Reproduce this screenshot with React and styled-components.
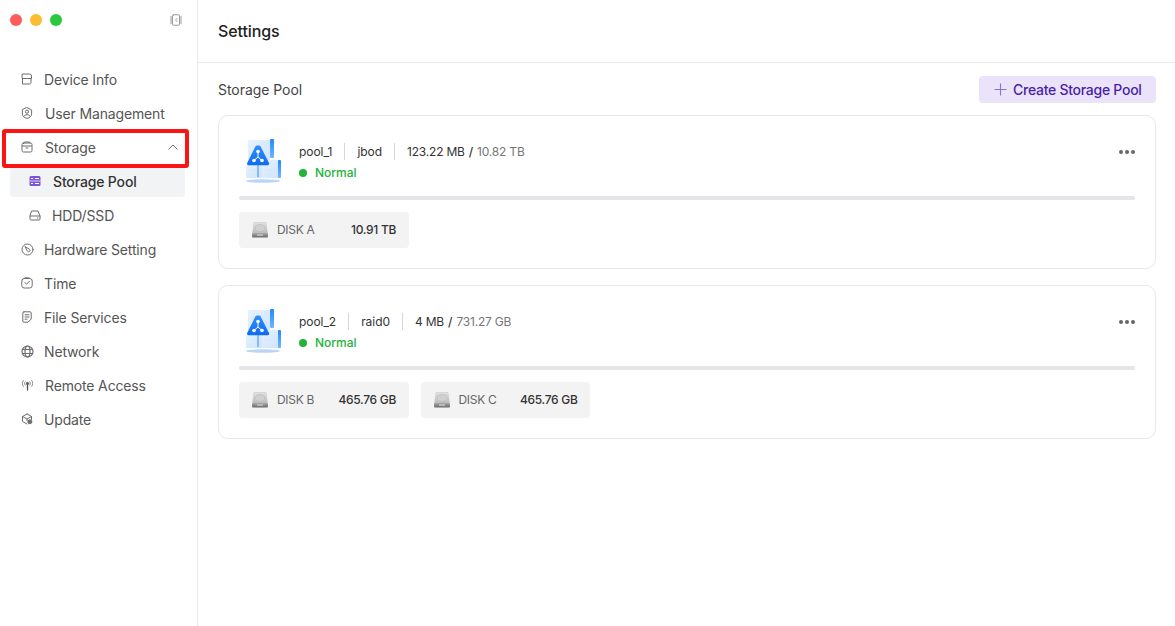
import React from "react";
import styled, { createGlobalStyle } from "styled-components";

const GlobalStyle = createGlobalStyle`
  html, body, #root {
    margin: 0;
    height: 100%;
  }
  body {
    background: #fff;
    font-family: Inter, "Noto Sans", sans-serif;
    color: #333;
    overflow: hidden;
  }
`;

const Page = styled.div`
  display: flex;
  width: 1175px;
  height: 626px;
`;

const Sidebar = styled.aside`
  position: relative;
  width: 197px;
  flex: none;
  border-right: 1px solid #e9e9ec;
`;

const WindowBar = styled.div`
  display: flex;
  align-items: center;
  height: 40px;
  margin-bottom: 23px;
  padding: 0 15px 0 10px;
`;

const Lights = styled.div`
  display: flex;
  gap: 8px;
  flex: 1;
`;

const Light = styled.span`
  width: 12px;
  height: 12px;
  border-radius: 50%;
  background: ${(p) => p.$color};
`;

const Nav = styled.nav`
  display: flex;
  flex-direction: column;
  padding: 0 12px 0 10px;
`;

const NavItem = styled.div`
  display: flex;
  align-items: center;
  gap: ${(p) => p.$gap || 11}px;
  height: 30px;
  box-sizing: border-box;
  margin: 2px 0;
  padding: 0 7px 2px ${(p) => (p.$sub ? 19 : 11)}px;
  border-radius: 4px;
  font-size: 14px;
  line-height: 17px;
  letter-spacing: -0.15px;
  font-weight: ${(p) => (p.$active ? 500 : 400)};
  color: ${(p) => (p.$active ? "#333" : "#555")};
  background: ${(p) => (p.$active ? "#f2f3f5" : "transparent")};
  svg {
    flex: none;
  }
`;

const NavLabel = styled.span`
  flex: 1;
`;

const Highlight = styled.div`
  position: absolute;
  left: 2px;
  top: 129px;
  width: 187px;
  height: 39px;
  box-sizing: border-box;
  border: 4px solid #fb1414;
  border-radius: 3px;
  pointer-events: none;
`;

const Main = styled.main`
  flex: 1;
  min-width: 0;
  display: flex;
  flex-direction: column;
`;

const Header = styled.header`
  display: flex;
  align-items: center;
  height: 62px;
  padding-left: 20px;
  border-bottom: 1px solid #e9e9ec;
  font-size: 16px;
  letter-spacing: -0.1px;
  font-weight: 500;
  color: #222;
`;

const Content = styled.div`
  padding: 13px 19px 0 20px;
`;

const SectionHead = styled.div`
  display: flex;
  align-items: center;
  justify-content: space-between;
  height: 27px;
  margin-bottom: 12px;
`;

const SectionTitle = styled.h2`
  margin: 0;
  font-size: 14px;
  font-weight: 400;
  letter-spacing: -0.05px;
  color: #444;
`;

const CreateButton = styled.button`
  display: flex;
  align-items: center;
  gap: 6px;
  height: 27px;
  width: 177px;
  padding: 0 0 0 15px;
  border: 0;
  border-radius: 4px;
  background: #ebe3fa;
  color: #4a1fa8;
  font: 500 14px Inter, sans-serif;
  letter-spacing: -0.27px;
`;

const Card = styled.section`
  height: 154px;
  box-sizing: border-box;
  margin-bottom: 16px;
  padding: 20px 20px 0;
  border: 1px solid #e8e8ea;
  border-radius: 10px;
`;

const CardTop = styled.div`
  display: flex;
  height: 48px;
  gap: 12px;
`;

const PoolInfo = styled.div`
  flex: 1;
  display: flex;
  flex-direction: column;
  gap: 4px;
  padding-top: 7px;
`;

const InfoLine = styled.div`
  display: flex;
  align-items: center;
  height: 17px;
  font-size: 12px;
  letter-spacing: -0.05px;
  color: #333;
`;

const Divider = styled.span`
  width: 1px;
  height: 17px;
  margin: 0 12px;
  background: #d6d6d9;
`;

const Used = styled.span`
  letter-spacing: -0.2px;
`;

const Slash = styled.span`
  margin: 0 4px;
  font-weight: 500;
`;

const Total = styled.span`
  color: #777;
  letter-spacing: -0.2px;
`;

const Status = styled.div`
  display: flex;
  align-items: center;
  gap: 8px;
  height: 17px;
  font-size: 12px;
  font-weight: 500;
  color: #22b33a;
  &::before {
    content: "";
    width: 8px;
    height: 8px;
    border-radius: 50%;
    background: #22b33a;
  }
`;

const MoreButton = styled.div`
  display: flex;
  gap: 2px;
  height: 4px;
  margin-top: 14px;
  span {
    width: 4px;
    height: 4px;
    border-radius: 50%;
    background: #666;
  }
`;

const UsageBar = styled.div`
  height: 4px;
  margin: 12px 0;
  border-radius: 2px;
  background: #e4e5e9;
`;

const Disks = styled.div`
  display: flex;
  gap: 12px;
`;

const DiskChip = styled.div`
  display: flex;
  align-items: center;
  width: 169.5px;
  height: 36px;
  box-sizing: border-box;
  padding: 0 12.5px 1px 12px;
  border-radius: 4px;
  background: #f3f3f4;
  font-size: 12px;
`;

const DiskName = styled.span`
  flex: 1;
  margin-left: 8px;
  letter-spacing: -0.3px;
  color: #666;
`;

const DiskSize = styled.span`
  font-weight: 500;
  letter-spacing: -0.3px;
  color: #333;
`;

const stroke = { fill: "none", stroke: "#6d6d72", strokeWidth: 1, strokeLinecap: "round", strokeLinejoin: "round" };

const NavIcon = ({ children }) => (
  <svg width="12" height="12" viewBox="0 0 12 12" {...stroke}>
    {children}
  </svg>
);

const icons = {
  device: (
    <NavIcon>
      <path d="M1.500 1h7a2 2 0 0 1 2 2v2.500h-9zM1.500 5.500V11h7a1.500 1.500 0 0 0 1.500-1.500v-4" />
    </NavIcon>
  ),
  user: (
    <NavIcon>
      <path d="M6 .6l4.600 2.300v4.200c0 2.100-2.600 4-4.600 4.300-2-.3-4.600-2.200-4.600-4.300V2.900z" />
      <circle cx="6" cy="4.700" r="1.600" />
      <path d="M3 9c1-1.900 5-1.900 6 0" />
    </NavIcon>
  ),
  storage: (
    <NavIcon>
      <rect x="1" y="2" width="10" height="9" rx="1.500" />
      <path d="M1.500 5h9M3 2l.5-1h5L9 2M5 7h2" />
    </NavIcon>
  ),
  hardware: (
    <svg width="13" height="13" viewBox="0 0 13 13" {...stroke}>
      <circle cx="6.500" cy="6.500" r="5.500" />
      <path d="M4.300 3.800l4 2.400a1.400 1.400 0 1 1-2 1.800z" />
    </svg>
  ),
  time: (
    <NavIcon>
      <rect x=".8" y="1.500" width="10.400" height="9.500" rx="2.500" />
      <path d="M3.800 5.500l1.800 1.700L8.300 4.300M4 .8h4" />
    </NavIcon>
  ),
  file: (
    <NavIcon>
      <path d="M3 .8h6a1.200 1.200 0 0 1 1.200 1.200v6l-3.200 3.200H3a1.200 1.200 0 0 1-1.200-1.200V2A1.200 1.200 0 0 1 3 .8z" />
      <path d="M4 3.800h4M4 6h4M4 8.200h2" />
    </NavIcon>
  ),
  network: (
    <svg width="13" height="13" viewBox="0 0 13 13" {...stroke} strokeWidth="1.200">
      <circle cx="6.500" cy="6.500" r="5.500" />
      <ellipse cx="6.500" cy="6.500" rx="2.500" ry="5.500" />
      <path d="M1.500 4.500h10M1.500 8.500h10" />
    </svg>
  ),
  remote: (
    <svg width="13" height="12" viewBox="0 0 13 12" {...stroke} strokeWidth=".8">
      <circle cx="6.500" cy="4.500" r="1.200" fill="#555" />
      <path d="M6.500 5.500V11" stroke="#555" strokeWidth="1.300" />
      <path d="M4.200 2.800c-.8 1-.8 2.400 0 3.400M8.800 2.800c.8 1 .8 2.400 0 3.400M2.300 1.500c-1.300 1.800-1.300 4.200 0 6M10.700 1.500c1.300 1.800 1.300 4.200 0 6" />
    </svg>
  ),
  update: (
    <NavIcon>
      <path d="M6 1l4.500 2.500v3M6 1L1.500 3.500v5L6 11M1.500 3.500L6 6l4.500-2.500M6 6v1.500" />
      <circle cx="8.800" cy="8.800" r="2" fill="#6d6d72" />
    </NavIcon>
  ),
};

const PoolIcon = ({ id }) => (
  <svg width="48" height="48" viewBox="0 0 48 48" style={{ flex: "none" }}>
    <defs>
      <linearGradient id={`${id}-panel`} x1="0" y1="0" x2="1" y2="1">
        <stop offset="0" stopColor="#e6f1fe" />
        <stop offset="1" stopColor="#cfe4fc" />
      </linearGradient>
      <linearGradient id={`${id}-bar`} x1="0" y1="0" x2="0" y2="1">
        <stop offset="0" stopColor="#1f8bff" />
        <stop offset="1" stopColor="#6fb6ff" />
      </linearGradient>
      <linearGradient id={`${id}-tri`} x1="0" y1="0" x2="0" y2="1">
        <stop offset="0" stopColor="#2f8fff" />
        <stop offset="1" stopColor="#0f6bf0" />
      </linearGradient>
    </defs>
    <rect x="9" y="4" width="22" height="26" rx="1" fill={`url(#${id}-panel)`} />
    <rect x="23" y="24" width="17" height="18" rx="1" fill={`url(#${id}-panel)`} />
    <rect x="7" y="29" width="16" height="13" rx="1" fill={`url(#${id}-panel)`} />
    <path d="M10 34h11M25 34h13" stroke="#d6e7fb" strokeWidth="1" />
    <rect x="31" y="3" width="4" height="19" rx="1" fill={`url(#${id}-bar)`} />
    <rect x="39" y="24" width="3" height="18" rx="1" fill={`url(#${id}-bar)`} />
    <ellipse cx="24" cy="45" rx="17" ry="1.700" fill="#b9d6f8" />
    <path d="M18 9.500h2a2 2 0 0 1 1.500 .8L30 27a1.500 1.500 0 0 1-1.300 2.200H9.500A1.500 1.500 0 0 1 8.200 27l8.300-16.700a2 2 0 0 1 1.500-.8z" fill={`url(#${id}-tri)`} />
    <path d="M19 15.500v5.500l-4 3.500M19 21l4 3.500" stroke="#fff" strokeWidth="1" fill="none" />
    <circle cx="19" cy="15.500" r="1.800" fill="#fff" />
    <circle cx="15" cy="24.500" r="1.800" fill="#fff" />
    <circle cx="23" cy="24.500" r="1.800" fill="#fff" />
    <path d="M19 29v12" stroke="#2f8fff" strokeWidth="1" />
  </svg>
);

const DiskIcon = ({ id }) => (
  <svg width="18" height="18" viewBox="0 0 18 18" style={{ flex: "none" }}>
    <defs>
      <linearGradient id={id} x1="0" y1="0" x2="0" y2="1">
        <stop offset="0" stopColor="#e2e2e2" />
        <stop offset="1" stopColor="#bcbcbc" />
      </linearGradient>
      <linearGradient id={`${id}-base`} x1="0" y1="0" x2="0" y2="1">
        <stop offset="0" stopColor="#a8a8a8" />
        <stop offset="1" stopColor="#6a6a6a" />
      </linearGradient>
    </defs>
    <path d="M3 1.500h12l1.500 10.500h-15z" fill={`url(#${id})`} stroke="#c2c2c2" strokeWidth=".5" />
    <ellipse cx="9" cy="7" rx="5" ry="3.500" fill="#d0d0d0" stroke="#b4b4b4" strokeWidth=".5" />
    <rect x="1" y="12" width="16" height="4.500" rx="1" fill={`url(#${id}-base)`} />
    <rect x="6" y="13.500" width="6" height="1" fill="#e4e4e4" />
  </svg>
);

const navItems = [
  { label: "Device Info", icon: icons.device },
  { label: "User Management", icon: icons.user, gap: 12 },
  { label: "Storage", icon: icons.storage, gap: 12, open: true },
  {
    label: "Storage Pool",
    sub: true,
    active: true,
    gap: 12,
    icon: (
      <svg width="12" height="12" viewBox="0 0 12 12">
        <rect x=".5" y="1" width="11" height="10" rx="1.500" fill="#7c54d8" />
        <path d="M2 3.500h2M6 3.500h4M2 8.500h2M6 8.500h4" stroke="#fff" strokeWidth="1.200" />
        <path d="M.5 6h11" stroke="#f2f3f5" strokeWidth=".8" />
      </svg>
    ),
  },
  {
    label: "HDD/SSD",
    sub: true,
    gap: 11,
    icon: (
      <NavIcon>
        <path d="M3 2h6l2 5v3a1 1 0 0 1-1 1H2a1 1 0 0 1-1-1V7zM1 7h10M8.500 9h.5" />
      </NavIcon>
    ),
  },
  { label: "Hardware Setting", icon: icons.hardware, gap: 10 },
  { label: "Time", icon: icons.time },
  { label: "File Services", icon: icons.file },
  { label: "Network", icon: icons.network, gap: 10 },
  { label: "Remote Access", icon: icons.remote, gap: 11 },
  { label: "Update", icon: icons.update },
];

const pools = [
  {
    id: "pool_1",
    type: "jbod",
    used: "123.22 MB",
    total: "10.82 TB",
    disks: [{ name: "DISK A", size: "10.91 TB" }],
  },
  {
    id: "pool_2",
    type: "raid0",
    used: "4 MB",
    total: "731.27 GB",
    disks: [
      { name: "DISK B", size: "465.76 GB" },
      { name: "DISK C", size: "465.76 GB" },
    ],
  },
];

const App = () => (
  <Page>
    <GlobalStyle />
    <Sidebar>
      <WindowBar>
        <Lights>
          <Light $color="#ff5b5b" />
          <Light $color="#febc2e" />
          <Light $color="#2bc840" />
        </Lights>
        <svg width="12" height="12" viewBox="0 0 12 12" {...stroke} stroke="#9a9a9e">
          <rect x="2.500" y=".8" width="7" height="10.400" rx="1" />
          <path d="M1 2.500v7M11 2.500v7M7 4.500L5.500 6 7 7.500" />
        </svg>
      </WindowBar>
      <Nav>
        {navItems.map((item) => (
          <NavItem key={item.label} $sub={item.sub} $active={item.active} $gap={item.gap}>
            {item.icon}
            <NavLabel>{item.label}</NavLabel>
            {item.open && (
              <svg width="10" height="6" viewBox="0 0 10 6" fill="none" stroke="#777" strokeWidth="1">
                <path d="M.5 5.500L5 1l4.500 4.500" />
              </svg>
            )}
          </NavItem>
        ))}
      </Nav>
      <Highlight />
    </Sidebar>
    <Main>
      <Header>Settings</Header>
      <Content>
        <SectionHead>
          <SectionTitle>Storage Pool</SectionTitle>
          <CreateButton>
            <svg width="13" height="13" viewBox="0 0 13 13" stroke="#8d6fd6" strokeWidth="1.100">
              <path d="M6.500 .5v12M.5 6.500h12" />
            </svg>
            Create Storage Pool
          </CreateButton>
        </SectionHead>
        {pools.map((pool) => (
          <Card key={pool.id}>
            <CardTop>
              <PoolIcon id={pool.id} />
              <PoolInfo>
                <InfoLine>
                  {pool.id}
                  <Divider />
                  {pool.type}
                  <Divider />
                  <Used>{pool.used}</Used>
                  <Slash>/</Slash>
                  <Total>{pool.total}</Total>
                </InfoLine>
                <Status>Normal</Status>
              </PoolInfo>
              <MoreButton>
                <span />
                <span />
                <span />
              </MoreButton>
            </CardTop>
            <UsageBar />
            <Disks>
              {pool.disks.map((disk) => (
                <DiskChip key={disk.name}>
                  <DiskIcon id={disk.name.replace(" ", "-")} />
                  <DiskName>{disk.name}</DiskName>
                  <DiskSize>{disk.size}</DiskSize>
                </DiskChip>
              ))}
            </Disks>
          </Card>
        ))}
      </Content>
    </Main>
  </Page>
);

export default App;
